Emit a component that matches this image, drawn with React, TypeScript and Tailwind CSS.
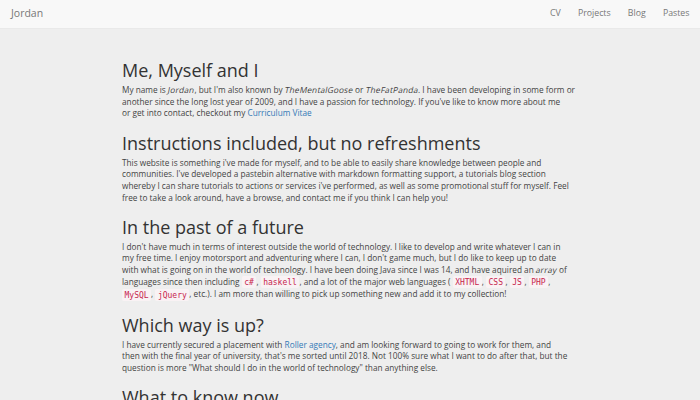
import React from "react";

const Code = ({ children }: { children: React.ReactNode }) => (
  <code className="rounded-[2px] bg-[#f9f2f4] px-[2.5px] py-[1.5px] font-['DejaVu_Sans_Mono','Liberation_Mono',monospace] text-[8px] text-[#c7254e]">
    {children}
  </code>
);

// faux oblique, the reference shows a slanted regular face
const I = ({ children }: { children: React.ReactNode }) => (
  <span className="inline-block -skew-x-12 tracking-[0.2px]">{children}</span>
);

const A = ({ children }: { children: React.ReactNode }) => (
  <a href="#" className="text-[#337ab7]">
    {children}
  </a>
);

const Section = ({ title, children }: { title: string; children: React.ReactNode }) => (
  <section>
    <h1 className="mb-[2px] text-[18px] leading-[24px] font-normal text-[#333]">{title}</h1>
    <p className="mb-[11.5px] whitespace-nowrap">{children}</p>
  </section>
);

export default function App() {
  return (
    <div className="min-h-[400px] bg-[#eeeeee] font-['Open_Sans',sans-serif] text-[8.25px] leading-[11.67px] text-[#444]">
      {/* NAVBAR */}
      <nav className="flex h-[29px] items-center justify-between border-b border-[#e9e9e9] bg-[#f8f8f8] pl-[11px] pr-[2px]">
        <span className="text-[10.5px] text-[#777]">Jordan</span>
        <div className="flex text-[8.75px] text-[#777]">
          {["CV", "Projects", "Blog", "Pastes"].map((l) => (
            <a key={l} href="#" className="px-[8.6px]">
              {l}
            </a>
          ))}
        </div>
      </nav>

      {/* CONTENT */}
      <main className="mx-auto w-[456px] pt-[29px]">
        <Section title="Me, Myself and I">
          My name is <I>Jordan</I>, but I'm also known by <I>TheMentalGoose</I> or <I>TheFatPanda</I>. I have been
          developing in some form or
          <br />
          another since the long lost year of 2009, and I have a passion for technology. If you've like to know more
          about me
          <br />
          or get into contact, checkout my <A>Curriculum Vitae</A>
        </Section>

        <Section title="Instructions included, but no refreshments">
          This website is something i've made for myself, and to be able to easily share knowledge between people and
          <br />
          communities. I've developed a pastebin alternative with markdown formatting support, a tutorials blog section
          <br />
          whereby I can share tutorials to actions or services i've performed, as well as some promotional stuff for
          myself. Feel
          <br />
          free to take a look around, have a browse, and contact me if you think I can help you!
        </Section>

        <Section title="In the past of a future">
          I don't have much in terms of interest outside the world of technology. I like to develop and write whatever I
          can in
          <br />
          my free time. I enjoy motorsport and adventuring where I can, I don't game much, but I do like to keep up to
          date
          <br />
          with what is going on in the world of technology. I have been doing Java since I was 14, and have aquired an{" "}
          <I>array</I> of
          <br />
          languages since then including <Code>c#</Code>, <Code>haskell</Code>, and a lot of the major web languages ({" "}
          <Code>XHTML</Code>, <Code>CSS</Code>, <Code>JS</Code>, <Code>PHP</Code>,
          <br />
          <Code>MySQL</Code>, <Code>jQuery</Code>, etc.). I am more than willing to pick up something new and add it to my
          collection!
        </Section>

        <Section title="Which way is up?">
          I have currently secured a placement with <A>Roller agency</A>, and am looking forward to going to work for
          them, and
          <br />
          then with the final year of university, that's me sorted until 2018. Not 100% sure what I want to do after
          that, but the
          <br />
          question is more "What should I do in the world of technology" than anything else.
        </Section>

        <Section title="What to know now">
          If you want to know anything else, feel free to get in touch.
        </Section>
      </main>
    </div>
  );
}
